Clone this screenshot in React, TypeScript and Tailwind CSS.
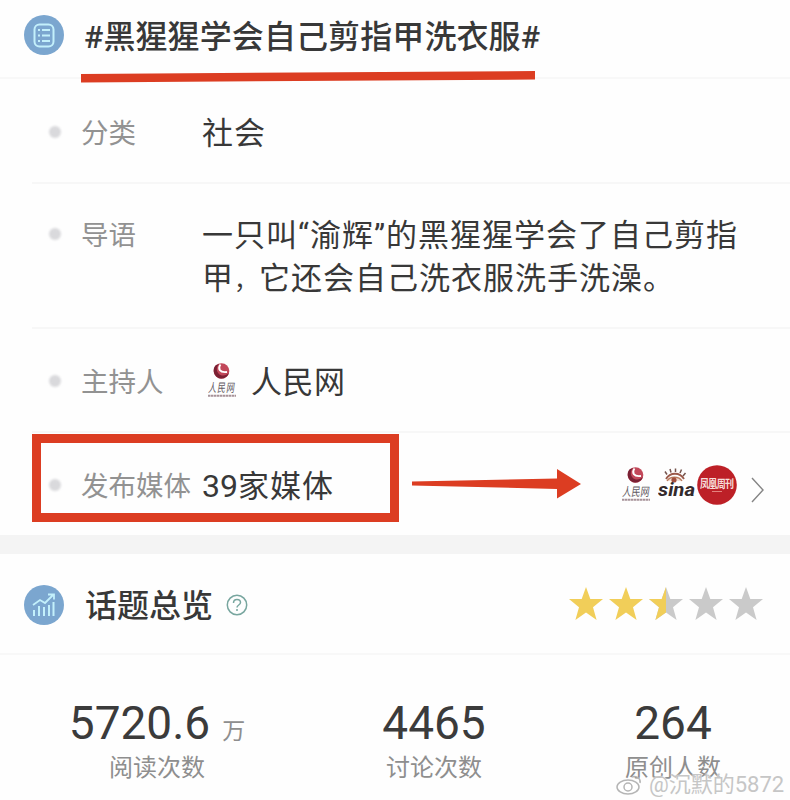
import React from "react";

function PeopleLogo({ className }: { className?: string }) {
  return (
    <svg viewBox="0 0 32 38" className={`overflow-visible ${className ?? ""}`} fontFamily='"Noto Sans CJK SC", sans-serif'>
      <circle cx="15.500" cy="9" r="7.800" fill="#c2485a" />
      <path d="M10 3C6.500 6 7 12 11 15c4 3 10 1.500 12-4-3 3-8 3.500-10.500.5C10 8.500 10.500 5 13 2z" fill="#7a2033" />
      <path d="M14.500 2.500c-3 4-1 8.500 6.500 7.500" fill="none" stroke="#fff" strokeWidth="1.800" />
      <text x="0" y="0" fontSize="10" textLength="27" lengthAdjust="spacingAndGlyphs" fill="#625a62" transform="translate(2 30) skewX(-8) scale(1 1.200)">人民网</text>
      <path d="M2 33.800h28" stroke="#a79399" strokeWidth="2" strokeDasharray="2.500 .5" />
    </svg>
  );
}

function SinaLogo() {
  return (
    <svg viewBox="0 0 40 34" className="h-[34px] w-10 shrink-0">
      <path d="M8 11C12 4 22 4 26 11" fill="none" stroke="#9b5a4a" strokeWidth="1.800" />
      <path d="M9 13C12 8 21 8 24 13" fill="#f3dfd5" stroke="#b97a5c" strokeWidth="1.300" />
      <circle cx="16" cy="12" r="2.600" fill="#a14e3c" />
      <path d="M9 6.500 7 3.500M13 4.500l-1-3.500M17.500 4V.5M22 5l1.500-3.500M25 8l2.500-3" stroke="#75544d" strokeWidth="1.500" />
      <text x="0" y="28" fontFamily="Roboto, sans-serif" fontSize="19" fontWeight="700" fontStyle="italic" textLength="37" lengthAdjust="spacingAndGlyphs" fill="#332a2b">sina</text>
    </svg>
  );
}

function PhoenixLogo() {
  return (
    <svg viewBox="0 0 40 40" className="size-10 shrink-0">
      <circle cx="20" cy="20" r="19.800" fill="#bd2027" />
      <text fontFamily='"Noto Sans CJK SC", sans-serif' fontSize="9" fontWeight="700" textLength="34" fill="#f7dedb" transform="translate(3 22.500) scale(1 1.200)">凤凰周刊</text>
      <path d="M15 26.500h10" stroke="#e4837e" strokeWidth="1" />
    </svg>
  );
}

function Star({ fill }: { fill: string }) {
  return (
    <svg viewBox="0 0 36 34" className="h-[34px] w-9">
      <path d="M18 0 22.300 12H35L25 20.300 28.600 33 18 25.500 7.400 33 11 20.300 1 12h12.700z" fill={fill} />
    </svg>
  );
}

function Row({ label, className, children }: { label: string; className: string; children: React.ReactNode }) {
  return (
    <div className={`flex pl-[49px] text-[31px] tracking-[1px] ${className}`}>
      <div className="flex h-[43px] w-[153px] shrink-0 items-center">
        <span className="mb-1 mr-[20px] size-3 rounded-full bg-[#d9d9dc] blur-[1px]" />
        <span className="whitespace-nowrap text-[27.500px] tracking-normal text-[#929292]">{label}</span>
      </div>
      {children}
    </div>
  );
}

function Stat({ value, unit, label, className }: { value: string; unit?: string; label: string; className: string }) {
  return (
    <div className={`flex flex-col items-center ${className}`}>
      <div className="flex h-14 items-baseline whitespace-nowrap text-[46px] leading-[56px] text-[#3b3b3b]">
        {value}
        {unit && <span className="ml-3 text-[23px] text-[#8e8e8e]">{unit}</span>}
      </div>
      <div className="mt-px text-[24px] leading-8 text-[#8e8e8e]">{label}</div>
    </div>
  );
}

export default function App() {
  return (
    <main className="relative flex h-[800px] w-[790px] flex-col overflow-hidden bg-[#fefefe] font-[Roboto,'Noto_Sans_CJK_SC',sans-serif] text-[32px] leading-[43px] text-[#383838]">
      <header className="flex h-[79px] shrink-0 items-start border-b-2 border-[#f8f8f8] pl-6 pt-[15px]">
        <svg viewBox="0 0 40 40" className="size-10">
          <circle cx="20" cy="20" r="20" fill="#7ba6cf" />
          <rect x="10.500" y="9.500" width="19" height="22" rx="5" fill="none" stroke="#c3f0fb" strokeWidth="2" />
          <path d="M14 15h2m2 0h8M14 20.500h2m2 0h8M14 26h2m2 0h8" stroke="#c3f0fb" strokeWidth="1.800" />
        </svg>
        <h1 className="ml-5 mt-px whitespace-nowrap font-medium tracking-[0.100px]">#黑猩猩学会自己剪指甲洗衣服#</h1>
      </header>
      <svg viewBox="0 0 454 13" className="absolute left-[81px] top-[70px] h-[13px] w-[454px]">
        <path d="M0 4 454 1v8.500L0 12.500z" fill="#dc3d22" />
      </svg>

      <Row label="分类" className="h-[103px] shrink-0 pt-[33px]">社会</Row>
      <div className="ml-8 h-[2px] shrink-0 bg-[#f7f7f7]" />
      <Row label="导语" className="h-[143px] shrink-0 pt-[30px]">
        <p className="w-[555px] whitespace-nowrap">一只叫“渝辉”的黑猩猩学会了自己剪指<br />甲<span className="text-[24px] leading-none">，</span>它还会自己洗衣服洗手洗澡。</p>
      </Row>
      <div className="ml-8 h-[2px] shrink-0 bg-[#f7f7f7]" />
      <Row label="主持人" className="h-[102px] shrink-0 pt-[32px]">
        <PeopleLogo className="ml-1 mt-px h-[38px] w-8" />
        <span className="ml-[13px] tracking-[0.500px]">人民网</span>
      </Row>
      <div className="ml-8 h-[2px] shrink-0 bg-[#f7f7f7]" />
      <Row label="发布媒体" className="h-[102px] shrink-0 pt-[32px]">
        <span className="w-[418px]"><span className="text-[32px] tracking-normal">39</span>家媒体</span>
        <div className="-mt-[3px] flex h-[46px] items-center tracking-normal">
          <PeopleLogo className="h-[38px] w-8" />
          <div className="ml-[6px]"><SinaLogo /></div>
          <div className="-ml-px"><PhoenixLogo /></div>
          <svg viewBox="0 0 16 26" className="ml-[13px] mt-[10px] h-[26px] w-4">
            <path d="m2 1 11 12L2 25" fill="none" stroke="#858585" strokeWidth="1.400" />
          </svg>
        </div>
      </Row>
      <div className="absolute left-8 top-[434px] h-[88px] w-[367px] border-[9px] border-[#dc3d22]" />
      <svg viewBox="0 0 170 32" className="absolute left-[412px] top-[468px] h-8 w-[170px]">
        <path d="M0 13.500 145 10.500V1L169 16 145 30.500V21L0 17.500z" fill="#dc3d22" />
      </svg>

      <div className="h-[19px] shrink-0 bg-[#f4f4f4]" />
      <section className="flex h-[101px] shrink-0 items-start border-b-2 border-[#f8f8f8] pl-6 pt-[30px]">
        <svg viewBox="0 0 40 40" className="mt-px size-10">
          <circle cx="20" cy="20" r="20" fill="#7ba6cf" />
          <path d="M10 31v-6m5 6V21m5 10v-9m5 9V20m4.500 11V17" stroke="#c3f0fb" strokeWidth="2" />
          <path d="m9 20 7-5 5 3 8-8m-5-.5h6v5" fill="none" stroke="#c3f0fb" strokeWidth="1.800" />
        </svg>
        <h2 className="ml-[21px] mt-px font-medium">话题总览</h2>
        <svg viewBox="0 0 22 22" className="ml-[13px] mt-[10px] size-[22px]" fill="none" stroke="#78a69f" strokeWidth="1.500">
          <circle cx="11" cy="11" r="9.700" />
          <path d="M7.500 9c0-5 7-4.500 7-.5 0 2.500-3.500 2.500-3.500 5M11 15v2" />
        </svg>
        <div className="ml-[320px] mt-[3px] flex gap-1">
          <Star fill="#f1ce59" />
          <Star fill="#f1ce59" />
          <svg viewBox="0 0 36 34" className="h-[34px] w-9">
            <path d="M18 0 22.300 12H35L25 20.300 28.600 33 18 25.500 7.400 33 11 20.300 1 12h12.700z" fill="#cacaca" />
            <path d="M18 0V25.500L7.400 33 11 20.300 1 12h12.700z" fill="#f1ce59" />
          </svg>
          <Star fill="#cacaca" />
          <Star fill="#cacaca" />
        </div>
      </section>

      <section className="flex pt-[40px]">
        <Stat value="5720.6" unit="万" label="阅读次数" className="ml-[57px] w-[200px]" />
        <Stat value="4465" label="讨论次数" className="ml-[76px] w-[202px]" />
        <Stat value="264" label="原创人数" className="ml-[38px] w-[200px]" />
      </section>

      <div className="absolute left-[615px] top-[773px] flex items-center text-[#c6c6c6]">
        <svg viewBox="0 0 30 24" className="h-6 w-[30px]" fill="none" stroke="#b5b5b5" strokeWidth="1.500">
          <ellipse cx="13" cy="14" rx="11" ry="7" fill="#fff" />
          <circle cx="13" cy="14" r="4" />
          <path d="M17 4c5-2 9 2 8 6" />
        </svg>
        <span className="ml-1 whitespace-nowrap text-[22px] leading-6 [text-shadow:0_0_2px_white]">@沉默的5872</span>
      </div>
    </main>
  );
}
